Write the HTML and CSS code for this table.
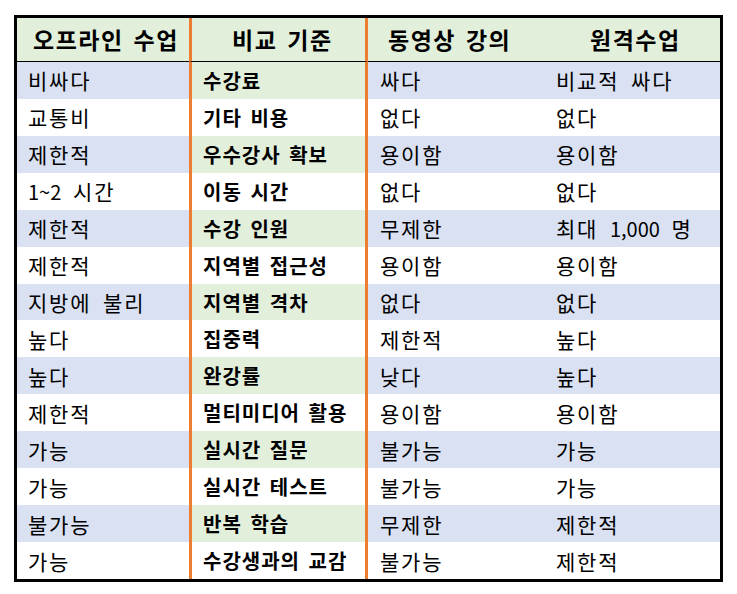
FILE: index.html
```html
<!DOCTYPE html>
<html lang="ko">
<head>
<meta charset="utf-8">
<link rel="stylesheet" href="styles.css">
</head>
<body>
<div class="grid">
  <div class="h c1">오프라인 수업</div><div class="h c2">비교 기준</div><div class="h c3">동영상 강의</div><div class="h c4">원격수업</div>

  <div class="d c1 b">비싸다</div><div class="d c2 g">수강료</div><div class="d c3 b">싸다</div><div class="d c4 b">비교적 싸다</div>
  <div class="d c1">교통비</div><div class="d c2">기타 비용</div><div class="d c3">없다</div><div class="d c4">없다</div>
  <div class="d c1 b">제한적</div><div class="d c2 g">우수강사 확보</div><div class="d c3 b">용이함</div><div class="d c4 b">용이함</div>
  <div class="d c1"><span class="num">1~2</span>&nbsp;시간</div><div class="d c2">이동 시간</div><div class="d c3">없다</div><div class="d c4">없다</div>
  <div class="d c1 b">제한적</div><div class="d c2 g">수강 인원</div><div class="d c3 b">무제한</div><div class="d c4 b">최대&nbsp;<span class="num">1,000</span>&nbsp;명</div>
  <div class="d c1">제한적</div><div class="d c2">지역별 접근성</div><div class="d c3">용이함</div><div class="d c4">용이함</div>
  <div class="d c1 b">지방에 불리</div><div class="d c2 g">지역별 격차</div><div class="d c3 b">없다</div><div class="d c4 b">없다</div>
  <div class="d c1">높다</div><div class="d c2">집중력</div><div class="d c3">제한적</div><div class="d c4">높다</div>
  <div class="d c1 b">높다</div><div class="d c2 g">완강률</div><div class="d c3 b">낮다</div><div class="d c4 b">높다</div>
  <div class="d c1">제한적</div><div class="d c2">멀티미디어 활용</div><div class="d c3">용이함</div><div class="d c4">용이함</div>
  <div class="d c1 b">가능</div><div class="d c2 g">실시간 질문</div><div class="d c3 b">불가능</div><div class="d c4 b">가능</div>
  <div class="d c1">가능</div><div class="d c2">실시간 테스트</div><div class="d c3">불가능</div><div class="d c4">가능</div>
  <div class="d c1 b">불가능</div><div class="d c2 g">반복 학습</div><div class="d c3 b">무제한</div><div class="d c4 b">제한적</div>
  <div class="d c1">가능</div><div class="d c2">수강생과의 교감</div><div class="d c3">불가능</div><div class="d c4">제한적</div>
</div>
</body>
</html>
```

FILE: styles.css
```css
html, body {
  margin: 0;
  background: #ffffff;
}
body {
  padding: 15px 0 0 14px;
  font-family: "Noto Sans CJK KR", "Noto Sans", sans-serif;
  color: #000;
}
.grid {
  width: 703px;
  height: 561px;
  border: 3px solid #000;
  display: grid;
  grid-template-columns: 172px 179px 176px 176px;
  grid-template-rows: 44px repeat(14, 1fr);
}
.h {
  background: #e2efda;
  border-bottom: 1px solid #000;
  font-weight: bold;
  font-size: 23px;
  letter-spacing: 1.5px;
  word-spacing: 2px;
  display: flex;
  align-items: center;
  justify-content: flex-start;
  padding-bottom: 1px;
  white-space: nowrap;
}
.h.c1 {
  padding-left: 16px;
}
.h.c2 {
  padding-left: 40px;
}
.h.c3 {
  padding-left: 20px;
}
.h.c4 {
  padding-left: 46px;
}
.c2 {
  border-left: 3px solid #ed7d31;
  border-right: 3px solid #ed7d31;
}
.d {
  display: flex;
  align-items: center;
  font-size: 21px;
  letter-spacing: 1.8px;
  word-spacing: 4px;
  padding-left: 11px;
  white-space: nowrap;
}
.d.c2 {
  font-weight: bold;
  font-size: 20px;
  letter-spacing: 1px;
  word-spacing: 2px;
}
.d.c3, .d.c4 {
  padding-left: 12px;
}
.num {
  font-size: 20px;
  letter-spacing: 0;
}
.b {
  background: #d9e1f2;
}
.g {
  background: #e2efda;
}
```
